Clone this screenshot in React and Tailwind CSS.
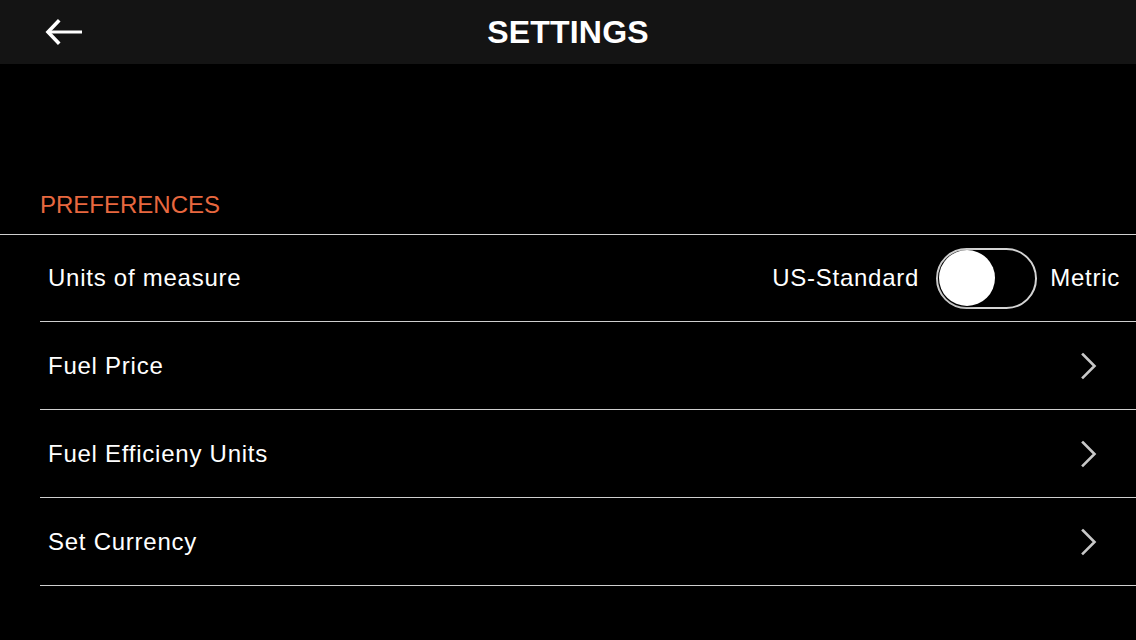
import React from 'react';

const rows = [
  { label: 'Fuel Price' },
  { label: 'Fuel Efficieny Units' },
  { label: 'Set Currency' },
];

const Chevron = () => (
  <svg width="18" height="28" viewBox="0 0 18 28" fill="none">
    <path d="M3 2.5 L14.5 14 L3 25.5" stroke="#c8c8c8" strokeWidth="2.6" strokeLinecap="square" />
  </svg>
);

const App = () => {
  return (
    <div className="w-[1136px] h-[640px] bg-black text-white overflow-hidden" style={{ fontFamily: '"Liberation Sans", Arial, sans-serif' }}>
      <header className="h-16 bg-[#141414] grid grid-cols-[1fr_auto_1fr] items-center">
        <div className="pl-[44px] flex items-center">
          <svg width="40" height="28" viewBox="0 0 40 28" fill="none">
            <path d="M4 14 H38" stroke="#fff" strokeWidth="3.2" />
            <path d="M14 3.5 L4 14 L14 24.5" stroke="#fff" strokeWidth="3.6" strokeLinecap="square" />
          </svg>
        </div>
        <h1 className="text-[32px] font-bold leading-none tracking-[0.2px]">SETTINGS</h1>
        <div />
      </header>

      <div className="pt-[125px]">
        <div className="pl-10 text-[24px] leading-8 text-[#e8683f] mb-[13px]">PREFERENCES</div>
        <div className="border-t border-[#cfcfcf]">
          <div className="ml-10 h-[87px] border-b border-[#cfcfcf] flex items-center justify-between pl-[8px] pr-4">
            <span className="text-[24px] tracking-[0.75px]">Units of measure</span>
            <div className="flex items-center">
              <span className="text-[24px] tracking-[0.75px] mr-[17px]">US-Standard</span>
              <div className="w-[101px] h-[61px] rounded-full border-2 border-[#d4d4d4] bg-black flex items-center pl-[1px]">
                <div className="w-[56px] h-[56px] rounded-full bg-white shadow-[0_1px_3px_rgba(0,0,0,0.5)]" />
              </div>
              <span className="text-[24px] tracking-[0.75px] ml-[13px]">Metric</span>
            </div>
          </div>
          {rows.map((r) => (
            <div key={r.label} className="ml-10 h-[88px] border-b border-[#cfcfcf] flex items-center justify-between pl-[8px] pr-[38px]">
              <span className="text-[24px] tracking-[0.75px]">{r.label}</span>
              <Chevron />
            </div>
          ))}
        </div>
      </div>
    </div>
  );
};

export default App;
